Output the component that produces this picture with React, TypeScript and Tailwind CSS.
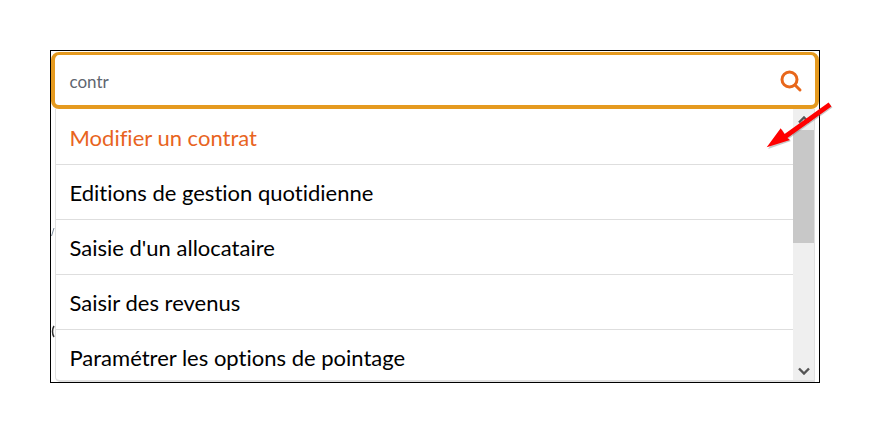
const items = [
  "Modifier un contrat",
  "Editions de gestion quotidienne",
  "Saisie d'un allocataire",
  "Saisir des revenus",
  "Paramétrer les options de pointage",
];

export default function App() {
  return (
    <div className="relative w-[870px] h-[433px] bg-white overflow-hidden font-['Lato',sans-serif] [font-variant-ligatures:none]">
      <div className="pt-[50px] pl-[50px]">
        <div className="relative w-[770px] h-[333px] border border-black overflow-hidden">
          {/* search box */}
          <div className="mt-[1px] w-[768px] h-[57px] border-x-4 border-t-[3px] border-b-4 border-[#e59a1f] rounded-[8px] bg-white flex items-center justify-between pl-[14.5px] pr-[12px]">
            <span className="text-[17px] text-[#5f6670] pt-[3px]">contr</span>
            <svg className="mt-[1px]" width="24" height="24" viewBox="0 0 24 24" fill="none" stroke="#e8671b" strokeWidth="3" strokeLinecap="round">
              <circle cx="10.5" cy="10.5" r="7.5" />
              <path d="M16 16l5 5" />
            </svg>
          </div>
          {/* results */}
          <div className="ml-[4px] w-[760px] h-[273px] border-l border-r border-b-2 border-[#e0e0e0] rounded-bl-[5px] flex overflow-hidden">
            <div className="flex-1 min-w-0 pt-[1px]">
              {items.map((label, i) => (
                <div
                  key={label}
                  className={`h-[55px] flex items-center pl-[13.5px] text-[22px] border-b border-[#dedede] ${i === 0 ? "text-[#e8641e]" : "text-black"}`}
                >
                  {label}
                </div>
              ))}
            </div>
            <div className="w-[21px] bg-[#efefef] flex flex-col">
              <div className="h-[21px] flex items-center justify-center">
                <svg width="12" height="8" viewBox="0 0 12 8" fill="none" stroke="#555" strokeWidth="2.4">
                  <path d="M1 6.5l5-5 5 5" />
                </svg>
              </div>
              <div className="h-[113px] bg-[#c8c8c8]" />
              <div className="flex-1 flex items-end justify-center pb-[5px]">
                <svg width="12" height="8" viewBox="0 0 12 8" fill="none" stroke="#555" strokeWidth="2.4">
                  <path d="M1 1.5l5 5 5-5" />
                </svg>
              </div>
            </div>
          </div>
        </div>
      </div>
      {/* bits of the page behind showing at the left edge */}
      <svg className="absolute left-[50px] top-[224px]" width="6" height="116" viewBox="0 0 6 116" fill="none">
        <path d="M4 4L1.5 12" stroke="#7d8b99" strokeWidth="1" />
        <path d="M4 102C2 105 2 110 4 113" stroke="#333" strokeWidth="1.5" />
      </svg>
      {/* red annotation arrow */}
      <svg className="absolute left-[760px] top-[95px]" width="80" height="60" viewBox="0 0 80 60">
        <path d="M7 53L21 33.5L24.6 39L68.6 7.5L71.4 11.5L27.4 43L30 45Z" fill="#777" opacity="0.4" transform="translate(1 1)" />
        <path d="M6.7 52.3L20.7 33.3L24.6 39L68.6 7.5L71.4 11.5L27.4 43L30 45Z" fill="#f00" />
      </svg>
    </div>
  );
}
